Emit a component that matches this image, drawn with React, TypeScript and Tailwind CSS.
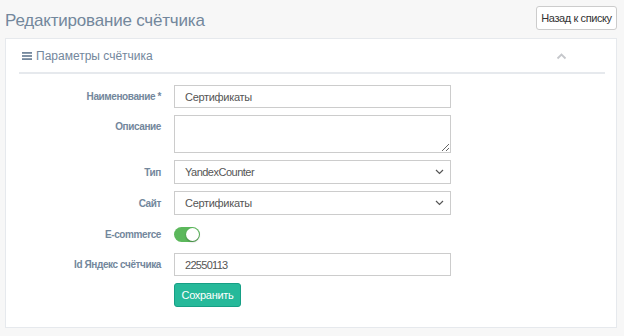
import React from 'react'

function Chevron() {
  return (
    <svg width="9" height="6" viewBox="0 0 9 6" className="text-[#555]">
      <path d="M1 1l3.5 3.5L8 1" fill="none" stroke="currentColor" strokeWidth="1.2" />
    </svg>
  )
}

function Row({ label, top, children }: { label: string; top?: boolean; children: React.ReactNode }) {
  return (
    <div className={`flex ${top ? 'items-start' : 'items-center'} gap-[13px]`}>
      <div className="w-[142px] h-[23px] flex items-center justify-end text-[10px] tracking-[-0.4px] font-bold text-[#73879c]">
        {label}
      </div>
      {children}
    </div>
  )
}

function SelectBox({ value, track }: { value: string; track: string }) {
  return (
    <div className="w-[277px] h-[24px] border border-[#ccc] bg-white flex items-center justify-between pl-[10px] pr-[6px] text-[11px] text-[#555]">
      <span className={track}>{value}</span>
      <Chevron />
    </div>
  )
}

export default function App() {
  const inputCls =
    'w-[277px] h-[23px] border border-[#ccc] bg-white pl-[10px] text-[11px] text-[#555] outline-none'

  return (
    <div className="min-h-[336px] bg-[#f7f7f7] pl-[5px] pr-[7px] pt-[6px] font-['Liberation_Sans',Arial,sans-serif]">
      <div className="flex justify-between items-start">
        <h3 className="text-[17px] tracking-[-0.2px] leading-[20px] text-[#73879c] mt-[5px]">Редактирование счётчика</h3>
        <button className="h-[24px] w-[81px] whitespace-nowrap border border-[#ccc] bg-white rounded-[3px] text-[11px] tracking-[-0.4px] text-[#333]">
          Назад к списку
        </button>
      </div>

      <div className="mt-[7px] bg-white border border-[#e6e9ed] pl-[13px] pr-[11px] pt-[8px] pb-[20px]">
        <div className="flex items-center justify-between border-b-2 border-[#e6e9ed] pb-[7px]">
          <div className="flex items-center gap-[4px] pl-[3px] text-[12px] text-[#73879c]">
            <svg width="10" height="8" viewBox="0 0 10 8" className="text-[#73879c]">
              <rect x="0" y="0" width="10" height="1.8" fill="currentColor" />
              <rect x="0" y="3.1" width="10" height="1.8" fill="currentColor" />
              <rect x="0" y="6.2" width="10" height="1.8" fill="currentColor" />
            </svg>
            <span>Параметры счётчика</span>
          </div>
          <svg width="11" height="7" viewBox="0 0 11 7" className="mr-[38px] text-[#c5c7cb]">
            <path d="M1.5 5.5l4-4 4 4" fill="none" stroke="currentColor" strokeWidth="1.8" />
          </svg>
        </div>

        <div className="mt-[11px] flex flex-col gap-[7px]">
          <Row label="Наименование *">
            <input className={`${inputCls} tracking-[-0.3px]`} defaultValue="Сертификаты" />
          </Row>
          <Row label="Описание" top>
            <textarea className="w-[277px] h-[38px] border border-[#ccc] bg-white px-[9px] text-[11px] text-[#555] outline-none block" />
          </Row>
          <Row label="Тип">
            <SelectBox value="YandexCounter" track="tracking-[-0.5px]" />
          </Row>
          <Row label="Сайт">
            <SelectBox value="Сертификаты" track="tracking-[-0.3px]" />
          </Row>
          <Row label="E-commerce">
            <div className="h-[24px] flex items-center">
              <div className="w-[26px] h-[15px] rounded-full bg-[#5cb85c] flex items-center justify-end pr-[1px]">
                <div className="w-[13px] h-[13px] rounded-full bg-white shadow-[0_1px_2px_rgba(0,0,0,0.3)]" />
              </div>
            </div>
          </Row>
          <Row label="Id Яндекс счётчика">
            <input className={`${inputCls} tracking-[-0.7px]`} defaultValue="22550113" />
          </Row>
          <div className="flex gap-[13px]">
            <div className="w-[142px]" />
            <button className="w-[67px] h-[24px] rounded-[3px] bg-[#26b99a] border border-[#169f85] text-white text-[11px] tracking-[-0.3px]">
              Сохранить
            </button>
          </div>
        </div>
      </div>
    </div>
  )
}
